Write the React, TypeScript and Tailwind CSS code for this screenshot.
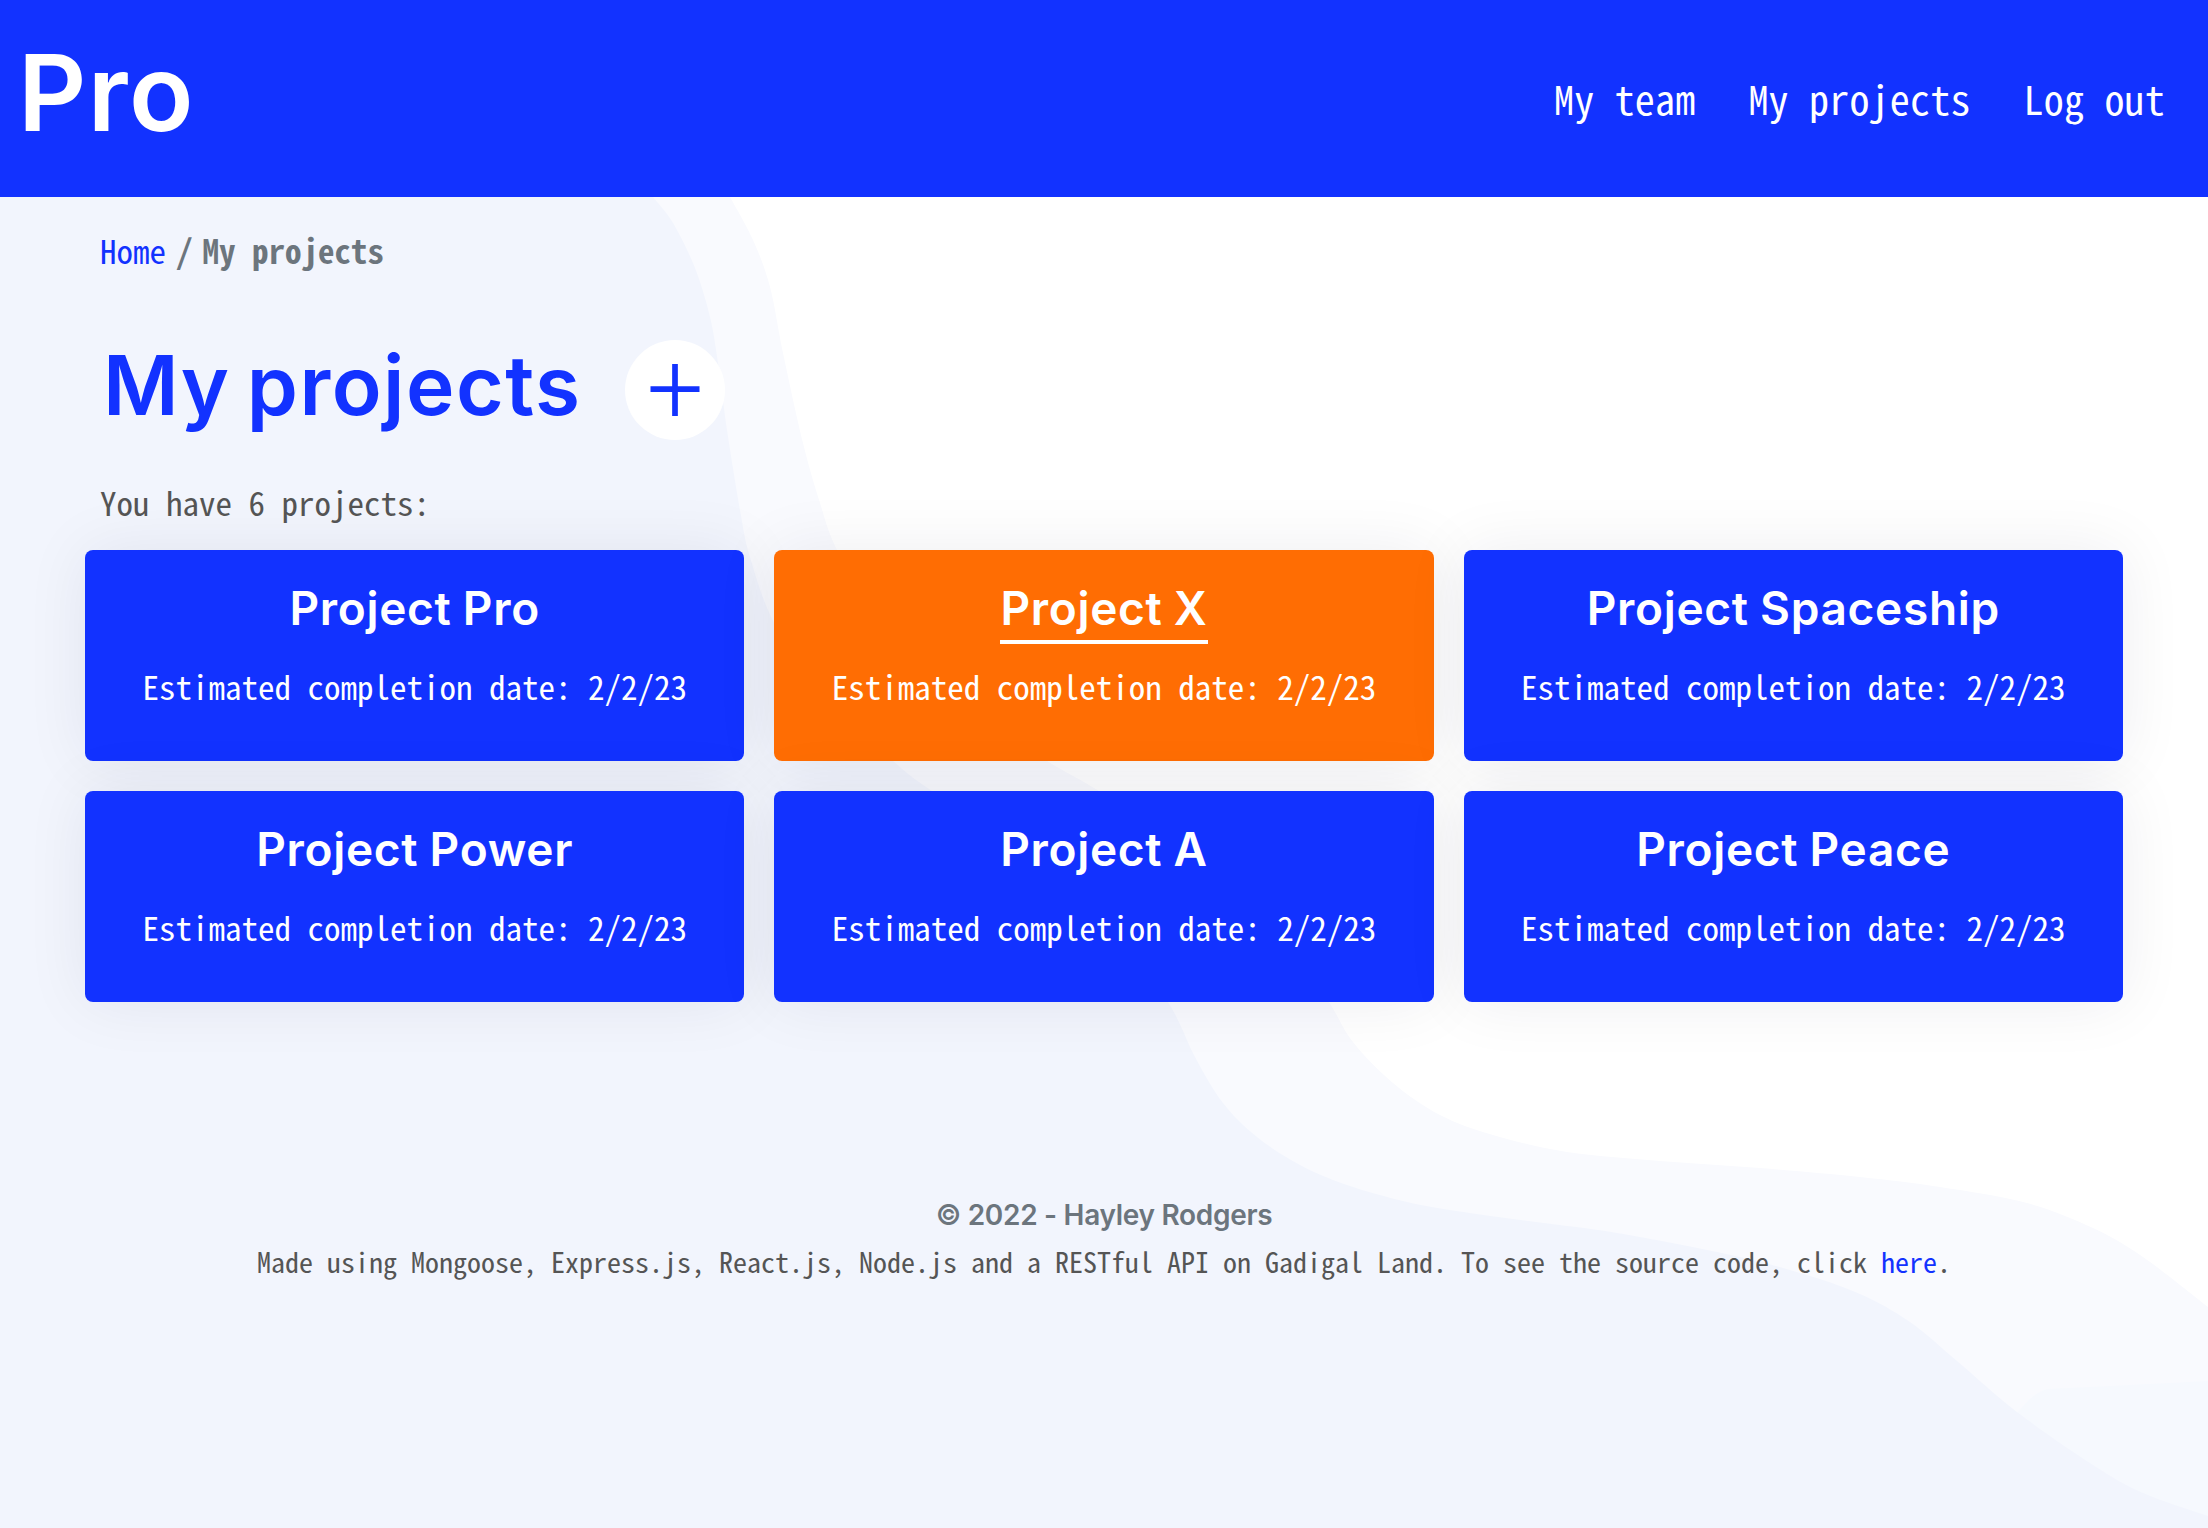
import React from "react";

const mono =
  "font-['Noto_Sans_Mono_CJK_SC','Noto_Sans_CJK_SC','Liberation_Mono',monospace] [font-feature-settings:'hwid']";

const projects = [
  { name: "Project Pro", due: "2/2/23" },
  { name: "Project X", due: "2/2/23", active: true },
  { name: "Project Spaceship", due: "2/2/23" },
  { name: "Project Power", due: "2/2/23" },
  { name: "Project A", due: "2/2/23" },
  { name: "Project Peace", due: "2/2/23" },
];

type Point = [number, number];

const outerWave: Point[] = [
  [730, 197], [753, 240], [770, 287], [783, 353], [803, 443], [820, 503], [837, 550], [880, 630], [950, 700],
  [1047, 761], [1099, 791], [1200, 855], [1280, 925], [1329, 1002], [1353, 1042], [1393, 1083], [1440, 1115],
  [1493, 1135], [1567, 1152], [1660, 1161], [1760, 1168], [1860, 1177], [1940, 1187], [2027, 1203], [2093, 1228],
  [2143, 1257], [2208, 1307],
];

const innerWave: Point[] = [
  [653, 197], [673, 223], [695, 268], [710, 317], [718, 363], [727, 430], [740, 510], [750, 557], [774, 623],
  [820, 695], [893, 761], [932, 791], [1030, 855], [1110, 920], [1168, 1002], [1195, 1057], [1223, 1103],
  [1257, 1137], [1300, 1165], [1347, 1185], [1407, 1202], [1456, 1211], [1536, 1222], [1617, 1233], [1731, 1255],
  [1800, 1273], [1860, 1294], [1910, 1322], [1957, 1361], [2017, 1412], [2093, 1465], [2143, 1493], [2208, 1516],
];

// Smooth curve through the points, closed along the left and bottom edges.
function wavePath(points: Point[]) {
  let d = `M0 ${points[0][1]}L${points[0][0]} ${points[0][1]}`;
  for (let i = 0; i < points.length - 1; i++) {
    const a = points[Math.max(i - 1, 0)];
    const b = points[i];
    const c = points[i + 1];
    const e = points[Math.min(i + 2, points.length - 1)];
    d += `C${b[0] + (c[0] - a[0]) / 6} ${b[1] + (c[1] - a[1]) / 6} ${c[0] - (e[0] - b[0]) / 6} ${c[1] - (e[1] - b[1]) / 6} ${c[0]} ${c[1]}`;
  }
  return `${d}V1528H0Z`;
}

function Backdrop() {
  return (
    <svg className="absolute inset-0 -z-10 h-full w-full" viewBox="0 0 2208 1528" aria-hidden="true">
      <path fill="#f9fafe" d={wavePath(outerWave)} />
      <path fill="#f6f9fe" d="M2000 1430L2018 1412Q2035 1391 2048 1389L2110 1386L2208 1381V1528H2000Z" />
      <path fill="#f2f5fd" d={wavePath(innerWave)} />
    </svg>
  );
}

function Header() {
  return (
    <header className="flex h-[197px] items-start justify-between bg-[#1232ff] pl-[18px] pr-[43px] text-white">
      <a className="pt-[29px] font-[Inter] text-[106px] leading-[128px] font-semibold tracking-[1.5px]">Pro</a>
      <nav className={`flex gap-[53px] pt-[76px] text-[40px] leading-[44px] font-light tracking-[0.2px] ${mono}`}>
        <a>My team</a>
        <a>My projects</a>
        <a>Log out</a>
      </nav>
    </header>
  );
}

function ProjectCard({ name, due, active }: { name: string; due: string; active?: boolean }) {
  return (
    <article
      className={`flex h-[211px] flex-col items-center rounded-lg pt-[30px] text-white shadow-[0_0_64px_rgba(25,32,56,0.075)] ${
        active ? "bg-[#ff6d03]" : "bg-[#1232ff]"
      }`}
    >
      <h2
        className={`h-[64px] border-b-4 font-[Inter] text-[46px] leading-[56px] font-semibold tracking-[0.7px] [word-spacing:-1px] ${
          active ? "border-white" : "border-transparent"
        }`}
      >
        {name}
      </h2>
      <p className={`mt-[22px] text-[33px] leading-[40px] font-light ${mono}`}>Estimated completion date: {due}</p>
    </article>
  );
}

export default function App() {
  return (
    <div className="relative isolate flex h-[1528px] w-[2208px] flex-col overflow-hidden bg-white">
      <Backdrop />
      <Header />
      <main className="px-[85px]">
        <div className={`flex items-center gap-[10px] pt-[33px] pl-[15px] text-[33px] leading-[40px] ${mono}`}>
          <a className="font-light text-[#1232ff]">Home</a>
          <span className="font-bold text-[#6c757d]">/</span>
          <span className="font-bold text-[#6c757d]">My projects</span>
        </div>
        <div className="mt-[70px] flex h-[100px] pl-[18px]">
          <h1 className="-mt-[4px] w-[522px] font-[Inter] text-[82px] leading-[100px] font-semibold tracking-[1.5px] [word-spacing:-6px] whitespace-nowrap text-[#1232ff]">
            My projects
          </h1>
          <button className="flex size-[100px] items-center justify-center rounded-full bg-white">
            <svg className="size-[52px]" viewBox="0 0 52 52" stroke="#1232ff" strokeWidth="5.7">
              <path d="M26 0V52M1.5 25.2H50.5" />
            </svg>
          </button>
        </div>
        <p className={`mt-[42px] pl-[15px] text-[33px] leading-[40px] font-light text-[#555] ${mono}`}>
          You have 6 projects:
        </p>
        <section className="mt-[28px] grid grid-cols-3 gap-[30px]">
          {projects.map((p) => (
            <ProjectCard key={p.name} {...p} />
          ))}
        </section>
      </main>
      <footer className="mt-[193px] flex flex-col items-center">
        <p className="font-[Inter] text-[28px] leading-[40px] font-semibold tracking-[-0.3px] text-[#6c757d]">
          © 2022 - Hayley Rodgers
        </p>
        <p className={`mt-[6px] text-[28px] leading-[40px] font-light text-[#555] ${mono}`}>
          Made using Mongoose, Express.js, React.js, Node.js and a RESTful API on Gadigal Land. To see the source code,
          click <a className="text-[#1232ff]">here</a>.
        </p>
      </footer>
    </div>
  );
}
